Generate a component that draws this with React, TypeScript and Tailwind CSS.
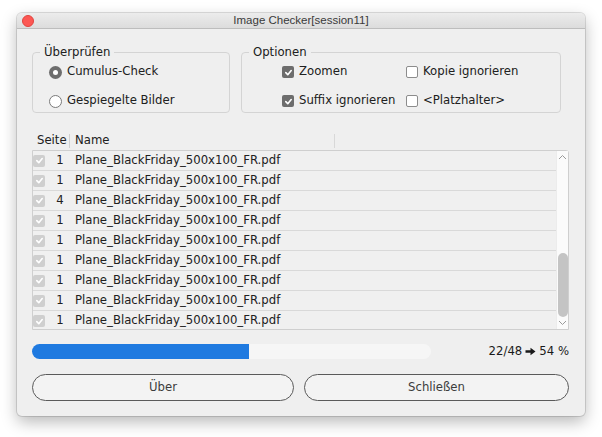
import React from 'react';

const rows = ['1', '1', '4', '1', '1', '1', '1', '1', '1'];

function Check({ on, muted }: { on: boolean; muted?: boolean }) {
  if (!on) {
    return <span className="inline-block h-[12px] w-[12px] rounded-[2px] border border-[#8c8c8c] bg-white" />;
  }
  return (
    <span
      className={`flex h-[12px] w-[12px] items-center justify-center rounded-[2px] ${
        muted ? 'bg-[#cfcfcf]' : 'bg-[#6d6d6d]'
      }`}
    >
      <svg width="9" height="9" viewBox="0 0 10 10">
        <path d="M2 5.2 L4.2 7.4 L8 2.8" fill="none" stroke="white" strokeWidth="1.8" strokeLinecap="round" strokeLinejoin="round" />
      </svg>
    </span>
  );
}

function Radio({ on }: { on: boolean }) {
  if (on) {
    return (
      <span className="flex h-[13px] w-[13px] items-center justify-center rounded-full bg-[#6d6d6d]">
        <span className="h-[5px] w-[5px] rounded-full bg-white" />
      </span>
    );
  }
  return <span className="inline-block h-[13px] w-[13px] rounded-full border border-[#7a7a7a] bg-white" />;
}

export default function App() {
  return (
    <div className="min-h-[437px] bg-white pl-[17px] pt-[13px]" style={{ fontFamily: '"DejaVu Sans", sans-serif' }}>
      <div className="flex h-[403px] w-[568px] flex-col overflow-hidden rounded-[5px] bg-[#efefef] shadow-[0_6px_16px_rgba(0,0,0,0.28),0_0_0_1px_rgba(0,0,0,0.12)]">
        {/* title bar */}
        <div className="relative flex h-[16px] items-center justify-center border-b border-[#bdbdbd] bg-gradient-to-b from-[#ececec] to-[#dcdcdc]">
          <span className="absolute left-[5px] top-[2px] h-[12px] w-[12px] rounded-full bg-[#fc5753] border border-[#e0443e]" />
          <span className="text-[11.5px] leading-none text-[#3a3a3a]" style={{ fontFamily: '"Liberation Sans", sans-serif' }}>
            Image Checker[session11]
          </span>
        </div>

        <div className="flex flex-col px-[15px] pt-[15px] text-[11.7px] text-[#202020]">
          {/* group boxes */}
          <div className="flex gap-[11px]">
            <fieldset className="h-[69px] w-[198px] rounded-[4px] border border-[#d4d4d4]">
              <legend className="ml-[7px] px-[4px] leading-[16px]">Überprüfen</legend>
              <div className="flex flex-col gap-[13px] pl-[16px] pt-[4px]">
                <label className="flex h-[16px] items-center gap-[5px]">
                  <Radio on />
                  <span>Cumulus-Check</span>
                </label>
                <label className="flex h-[16px] items-center gap-[5px]">
                  <Radio on={false} />
                  <span>Gespiegelte Bilder</span>
                </label>
              </div>
            </fieldset>
            <fieldset className="h-[69px] w-[320px] rounded-[4px] border border-[#d4d4d4]">
              <legend className="ml-[7px] px-[4px] leading-[16px]">Optionen</legend>
              <div className="grid grid-cols-[124px_1fr] gap-y-[13px] pl-[40px] pt-[4px]">
                <label className="flex h-[16px] items-center gap-[5px]">
                  <Check on />
                  <span>Zoomen</span>
                </label>
                <label className="flex h-[16px] items-center gap-[5px]">
                  <Check on={false} />
                  <span>Kopie ignorieren</span>
                </label>
                <label className="flex h-[16px] items-center gap-[5px]">
                  <Check on />
                  <span>Suffix ignorieren</span>
                </label>
                <label className="flex h-[16px] items-center gap-[5px]">
                  <Check on={false} />
                  <span>&lt;Platzhalter&gt;</span>
                </label>
              </div>
            </fieldset>
          </div>

          {/* table header */}
          <div className="mt-[20px] flex h-[16px] items-center">
            <span className="w-[37px] pl-[5px]">Seite</span>
            <span className="h-[14px] w-px bg-[#d0d0d0]" />
            <span className="w-[264px] pl-[5px]">Name</span>
            <span className="h-[14px] w-px bg-[#d8d8d8]" />
          </div>

          {/* table body */}
          <div className="mt-px flex h-[180px] w-[537px] rounded-tr-[3px] border border-[#cfcfcf] bg-[#f0f0f0]">
            <div className="flex flex-1 flex-col">
              {rows.map((p, i) => (
                <div
                  key={i}
                  className={`flex h-[20px] shrink-0 items-center ${i < rows.length - 1 ? 'border-b border-[#d9d9d9]' : ''}`}
                >
                  <span className="w-[12px]">
                    <Check on muted />
                  </span>
                  <span className="w-[30px] text-center">{p}</span>
                  <span>Plane_BlackFriday_500x100_FR.pdf</span>
                </div>
              ))}
            </div>
            <div className="flex w-[12px] flex-col items-center border-l border-[#ececec] bg-[#fbfbfb]">
              <svg width="9" height="6" viewBox="0 0 9 6" className="mt-[3px]">
                <path d="M1 5 L4.5 1.5 L8 5" fill="none" stroke="#9a9a9a" strokeWidth="1" />
              </svg>
              <div className="flex-1" />
              <div className="h-[64px] w-[10px] rounded-full bg-[#c4c4c4]" />
              <svg width="9" height="6" viewBox="0 0 9 6" className="mb-[3px] mt-[3px]">
                <path d="M1 1 L4.5 4.5 L8 1" fill="none" stroke="#9a9a9a" strokeWidth="1" />
              </svg>
            </div>
          </div>

          {/* progress */}
          <div className="mt-[14px] flex h-[15px] items-center justify-between">
            <div className="h-[15px] w-[399px] overflow-hidden rounded-full bg-[#f6f6f6]">
              <div className="h-full bg-[#1f7ae0]" style={{ width: `${(217 / 399) * 100}%` }} />
            </div>
            <span className="flex items-center gap-[3px] pr-[1px] text-[#1a1a1a]">
              22/48
              <svg width="11" height="9" viewBox="0 0 11 9">
                <path d="M0.5 3.2 H5.5 V0.8 L10.5 4.5 L5.5 8.2 V5.8 H0.5 Z" fill="#1a1a1a" />
              </svg>
              54 %
            </span>
          </div>

          {/* buttons */}
          <div className="mt-[15px] flex gap-[10px]">
            <button className="h-[27px] w-[262px] rounded-full border border-[#5a5a5a] bg-[#f3f3f3] text-[#3c3c3c]">
              Über
            </button>
            <button className="h-[27px] w-[265px] rounded-full border border-[#5a5a5a] bg-[#f3f3f3] text-[#3c3c3c]">
              Schließen
            </button>
          </div>
        </div>
      </div>
    </div>
  );
}
